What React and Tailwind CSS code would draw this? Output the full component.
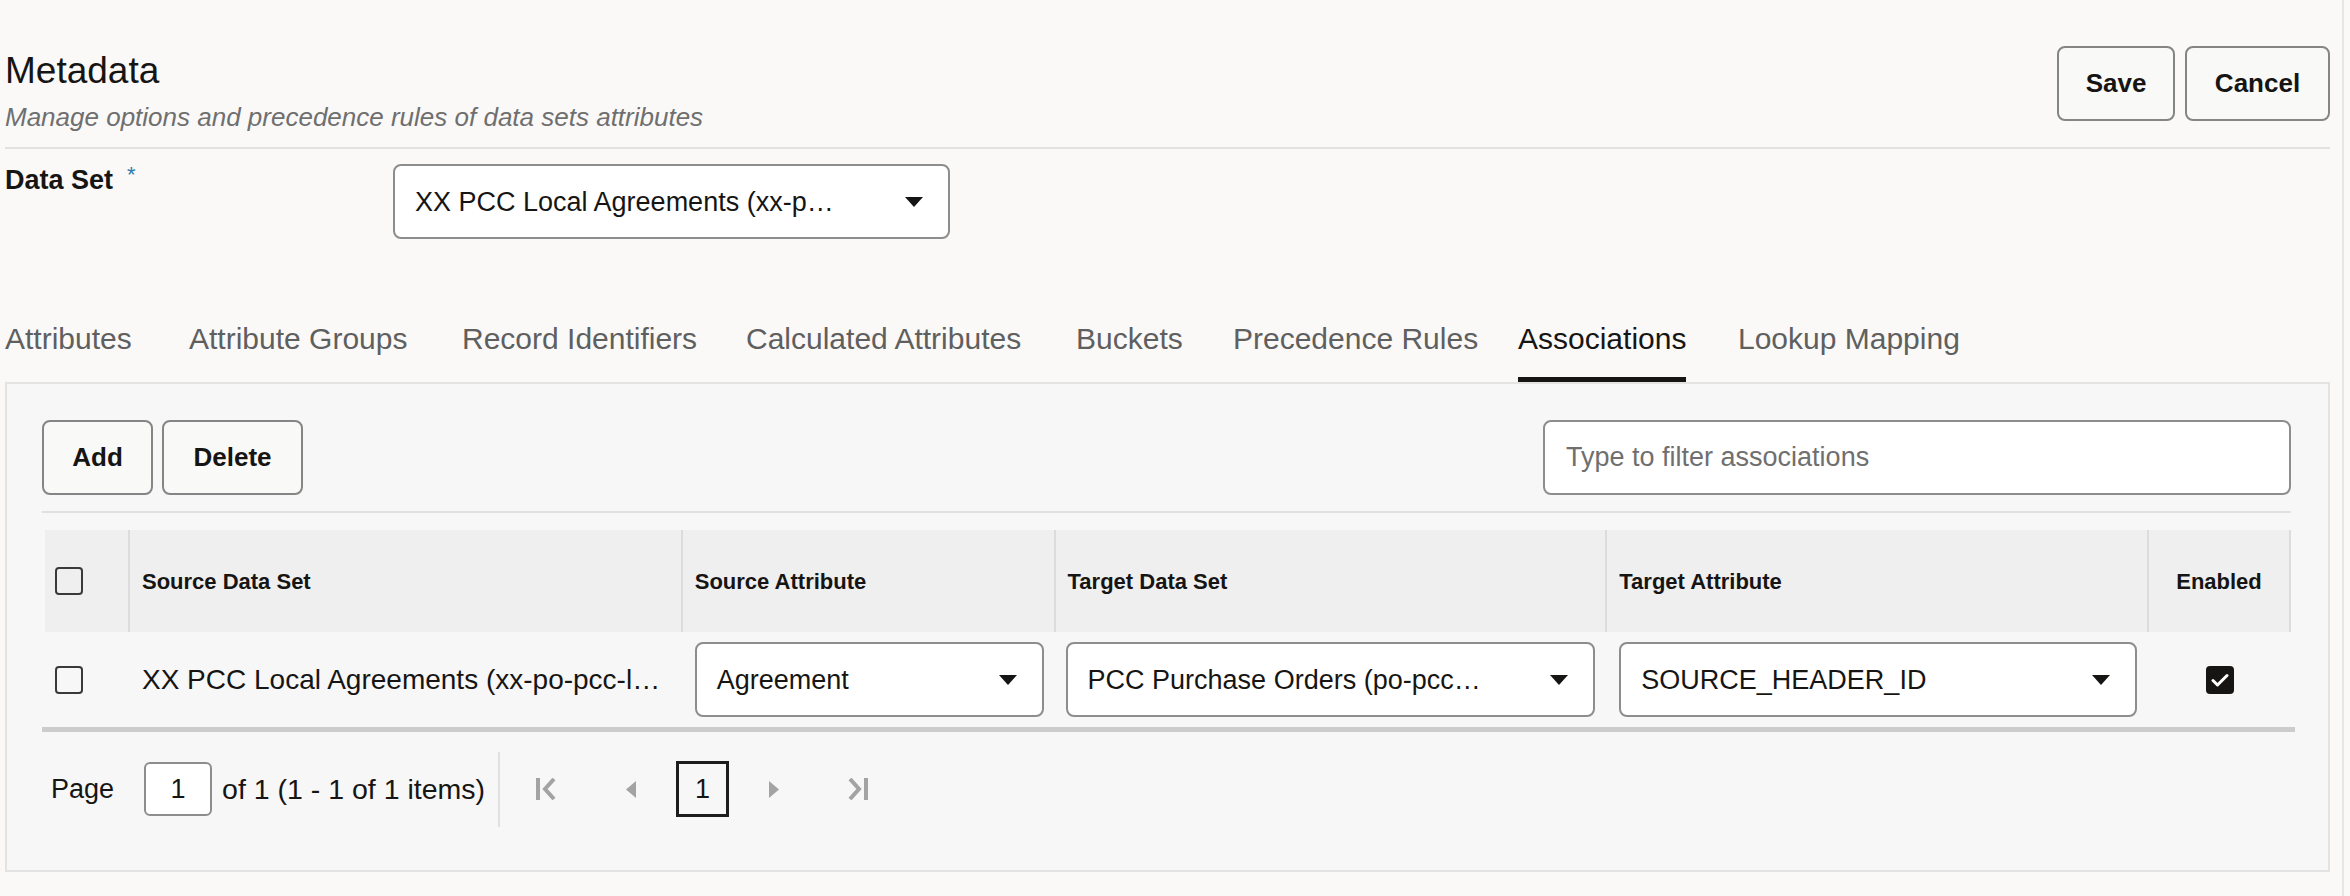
import React from "react";

const tabs = [
  { label: "Attributes", w: "w-[184px]" },
  { label: "Attribute Groups", w: "w-[273px]" },
  { label: "Record Identifiers", w: "w-[284px]" },
  { label: "Calculated Attributes", w: "w-[330px]" },
  { label: "Buckets", w: "w-[157px]" },
  { label: "Precedence Rules", w: "w-[285px]" },
  { label: "Associations", w: "w-[220px]", active: true },
  { label: "Lookup Mapping", w: "w-[240px]" },
];

const Caret = () => (
  <svg width="18" height="10" viewBox="0 0 18 10" className="shrink-0">
    <path d="M0 0h18L9 10z" fill="#161513" />
  </svg>
);

function Select({ value, className = "" }) {
  return (
    <div
      className={`flex items-center justify-between h-[75px] bg-white border-2 border-[#8d8d8d] rounded-[8px] pl-[20px] pr-[25px] ${className}`}
    >
      <span className="text-[27px] leading-[32px] whitespace-nowrap">{value}</span>
      <Caret />
    </div>
  );
}

function Checkbox({ checked }) {
  if (checked) {
    return (
      <div className="w-[28px] h-[28px] rounded-[4px] bg-[#161513] flex items-center justify-center">
        <svg width="18" height="14" viewBox="0 0 18 14">
          <path d="M2 7.5l4.5 4.5L16 2.5" stroke="#fff" strokeWidth="3" fill="none" strokeLinecap="round" strokeLinejoin="round" />
        </svg>
      </div>
    );
  }
  return <div className="w-[28px] h-[28px] rounded-[4px] border-2 border-[#3a3a3a]" />;
}

function OutlineButton({ children, className = "" }) {
  return (
    <button
      className={`h-[75px] border-2 border-[#858585] rounded-[8px] bg-[#f9f9f8] text-[26px] font-bold text-[#161513] ${className}`}
    >
      {children}
    </button>
  );
}

// column widths, header cells carry the separator on their right edge
const cols = ["w-[85px]", "w-[553px]", "w-[373px]", "w-[552px]", "w-[542px]", "w-[142px]"];

export default function App() {
  return (
    <div className="min-h-screen bg-[#faf9f8] font-['Liberation_Sans',Arial,sans-serif] text-[#161513]">
      <div className="w-[2344px] min-h-[896px] border-r-2 border-[#e6e6e6] pl-[5px] pr-[12px]">
        {/* header */}
        <div className="flex justify-between h-[149px] border-b-2 border-[#e2e2e2]">
          <div className="pt-[49px]">
            <h1 className="text-[37px] leading-[44px]">Metadata</h1>
            <p className="mt-[8px] text-[26px] leading-[32px] italic text-[#6f6f6f]">
              Manage options and precedence rules of data sets attributes
            </p>
          </div>
          <div className="flex gap-[10px] pt-[46px]">
            <OutlineButton className="w-[118px]">Save</OutlineButton>
            <OutlineButton className="w-[145px]">Cancel</OutlineButton>
          </div>
        </div>

        {/* data set selector */}
        <div className="flex mt-[15px]">
          <div className="w-[388px] text-[27px] leading-[32px] font-bold">
            Data Set
            <span className="relative -top-[7px] ml-[14px] text-[22px] font-normal text-[#2a7cab]">*</span>
          </div>
          <Select className="w-[557px]" value="XX PCC Local Agreements (xx-p…" />
        </div>

        {/* tabs */}
        <div className="flex">
          {tabs.map(t => (
            <div key={t.label} className={`${t.w} shrink-0 pt-[82px]`}>
              <div className="inline-flex flex-col">
                <span
                  className={`text-[30px] leading-[35px] whitespace-nowrap ${t.active ? "text-[#161513]" : "text-[#5f5f5f]"}`}
                >
                  {t.label}
                </span>
                <span className={`mt-[21px] h-[5px] ${t.active ? "bg-[#161513]" : "bg-transparent"}`} />
              </div>
            </div>
          ))}
        </div>

        {/* associations panel */}
        <div className="h-[490px] border-2 border-[#e3e3e3] bg-[#f7f7f7] pl-[35px] pr-[37px] pt-[36px]">
          <div className="flex justify-between">
            <div className="flex gap-[9px]">
              <OutlineButton className="w-[111px] bg-[#f7f7f7]">Add</OutlineButton>
              <OutlineButton className="w-[141px] bg-[#f7f7f7]">Delete</OutlineButton>
            </div>
            <div className="w-[748px] h-[75px] bg-white border-2 border-[#8d8d8d] rounded-[8px] pl-[21px] flex items-center">
              <span className="text-[27px] text-[#6f6f6f]">Type to filter associations</span>
            </div>
          </div>
          <div className="mt-[16px] h-[2px] bg-[#e0e0e0]" />

          {/* table */}
          <div className="mt-[17px]">
            <div className="ml-[3px] flex h-[102px] bg-[#efefef]">
              <div className={`${cols[0]} border-r-2 border-[#dcdcdc] pl-[10px] flex items-center`}>
                <Checkbox />
              </div>
              {["Source Data Set", "Source Attribute", "Target Data Set", "Target Attribute"].map((h, i) => (
                <div
                  key={h}
                  className={`${cols[i + 1]} border-r-2 border-[#dcdcdc] pl-[12px] flex items-center text-[22px] font-bold`}
                >
                  {h}
                </div>
              ))}
              <div className={`${cols[5]} border-r-2 border-[#dcdcdc] flex items-center justify-center text-[22px] font-bold`}>
                Enabled
              </div>
            </div>

            <div className="ml-[3px] flex h-[95px] items-center">
              <div className={`${cols[0]} pl-[10px]`}>
                <Checkbox />
              </div>
              <div className={`${cols[1]} pl-[12px] text-[28px] whitespace-nowrap`}>
                XX PCC Local Agreements (xx-po-pcc-l…
              </div>
              <div className={`${cols[2]} pl-[12px] pr-[12px]`}>
                <Select value="Agreement" />
              </div>
              <div className={`${cols[3]} pl-[10px] pr-[12px]`}>
                <Select value="PCC Purchase Orders (po-pcc…" />
              </div>
              <div className={`${cols[4]} pl-[12px] pr-[12px]`}>
                <Select value="SOURCE_HEADER_ID" />
              </div>
              <div className={`${cols[5]} flex justify-center`}>
                <Checkbox checked />
              </div>
            </div>
            <div className="w-[2253px] h-[5px] bg-[#cccccc]" />
          </div>

          {/* pagination */}
          <div className="flex items-center h-[114px] text-[27px]">
            <span className="ml-[9px]">Page</span>
            <div className="ml-[30px] w-[68px] h-[54px] bg-white border-2 border-[#8d8d8d] rounded-[6px] flex items-center justify-center">
              1
            </div>
            <span className="ml-[10px] w-[267px] text-[28.5px] whitespace-nowrap">of 1 (1 - 1 of 1 items)</span>
            <div className="ml-[9px] w-[2px] h-[75px] bg-[#e0e0e0]" />
            <svg width="20" height="22" viewBox="0 0 20 22" className="ml-[36px]">
              <rect x="0" y="0" width="4" height="22" fill="#a3a3a3" />
              <path d="M18 1L9 11l9 10" stroke="#a3a3a3" strokeWidth="4" fill="none" />
            </svg>
            <svg width="10" height="17" viewBox="0 0 10 17" className="ml-[70px]">
              <path d="M10 0v17L0 8.5z" fill="#a3a3a3" />
            </svg>
            <div className="ml-[40px] w-[53px] h-[56px] border-[3px] border-[#1d1d1d] flex items-center justify-center">
              1
            </div>
            <svg width="10" height="17" viewBox="0 0 10 17" className="ml-[40px]">
              <path d="M0 0v17l10-8.5z" fill="#a3a3a3" />
            </svg>
            <svg width="20" height="22" viewBox="0 0 20 22" className="ml-[69px]">
              <path d="M2 1l9 10-9 10" stroke="#a3a3a3" strokeWidth="4" fill="none" />
              <rect x="16" y="0" width="4" height="22" fill="#a3a3a3" />
            </svg>
          </div>
        </div>
      </div>
    </div>
  );
}
